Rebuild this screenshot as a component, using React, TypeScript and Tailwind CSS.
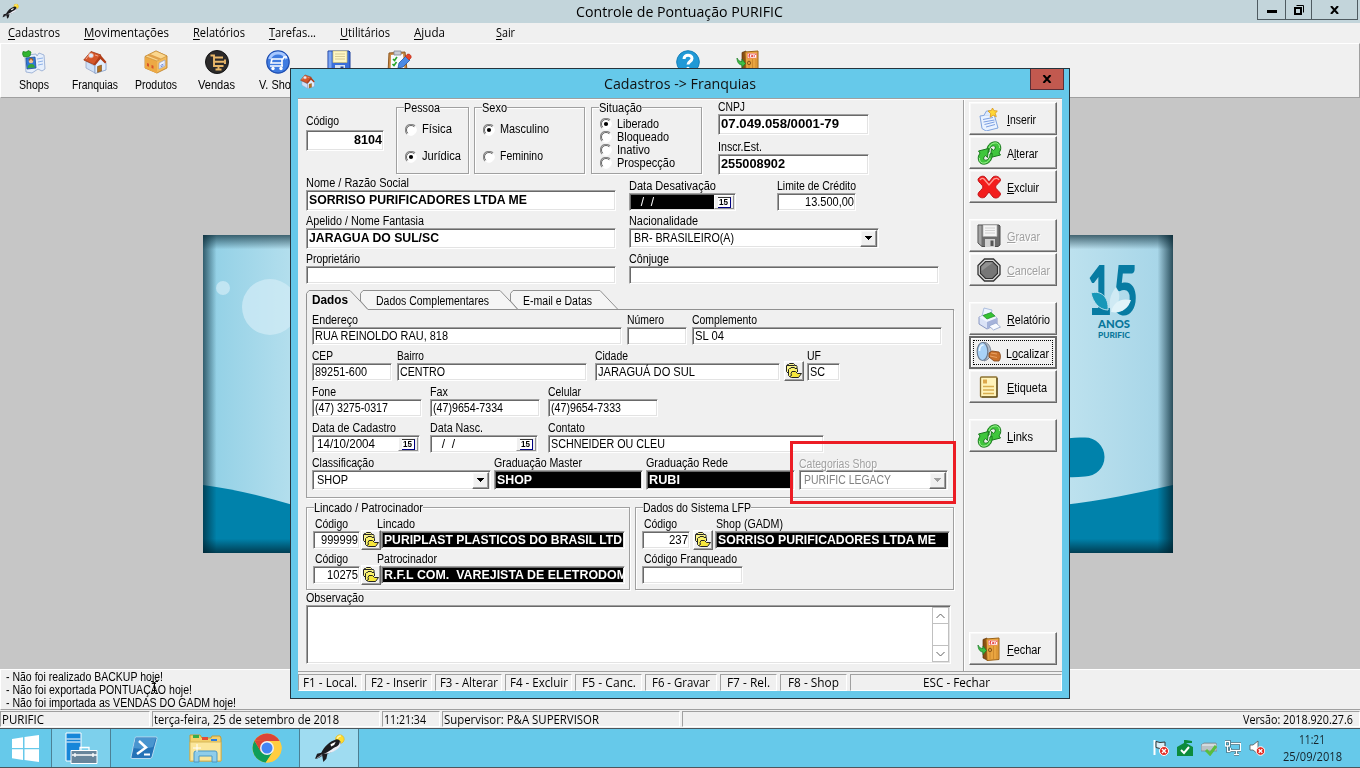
import { useLayoutEffect, useRef, type ReactNode } from 'react';
import { clsx } from 'clsx';

/* Text that is condensed or widened so that it takes a given width. */
function Fit({ w, className, children }: { w: number; className?: string; children: ReactNode }) {
  const ref = useRef<HTMLSpanElement>(null);
  useLayoutEffect(() => {
    const el = ref.current;
    if (!el) return;
    el.style.transform = 'none';
    const natural = el.getBoundingClientRect().width;
    el.style.transform = `scaleX(${w / natural})`;
  }, [w, children]);
  return (
    <span className={clsx('inline-block shrink-0 whitespace-pre', className)} style={{ width: w }}>
      <span ref={ref} className="inline-block origin-left whitespace-pre">
        {children}
      </span>
    </span>
  );
}

const sunken =
  'border border-t-[#a0a0a0] border-l-[#a0a0a0] border-b-white border-r-white shadow-[inset_1px_1px_0_#696969,inset_-1px_-1px_0_#e3e3e3]';
const raised =
  'border border-t-white border-l-white border-b-[#696969] border-r-[#696969] shadow-[inset_-1px_-1px_0_#a0a0a0,inset_1px_1px_0_#f8f8f8] bg-[#f0f0f0]';

type BoxProps = {
  w: string;
  h?: string;
  value?: string;
  vw?: number;
  bold?: boolean;
  dark?: boolean;
  right?: boolean;
  gray?: boolean;
  children?: ReactNode;
};

function Box({ w, h = 'h-[19px]', value, vw, bold, dark, right, gray, children }: BoxProps) {
  return (
    <div
      className={clsx(
        'flex shrink-0 items-center overflow-hidden',
        sunken,
        w,
        h,
        dark ? 'bg-black text-white' : 'bg-white',
        gray && 'text-[#838383]',
        right ? 'justify-end pr-[1px]' : children ? 'pl-[4px]' : 'pl-[2px]',
        bold && 'pb-[1px] font-bold',
      )}
    >
      {value && (
        <Fit w={vw ?? 40} className="leading-[14px]">
          {value}
        </Fit>
      )}
      {children}
    </div>
  );
}

function Field({
  label,
  lw,
  className,
  labelClass,
  children,
}: {
  label: string;
  lw: number;
  className?: string;
  labelClass?: string;
  children: ReactNode;
}) {
  return (
    <div className={clsx('flex flex-col', className)}>
      <div className={clsx('flex h-[13px] items-center leading-[13px]', labelClass)}>
        <Fit w={lw}>{label}</Fit>
      </div>
      {children}
    </div>
  );
}

function Arrow({ gray }: { gray?: boolean }) {
  return (
    <div className={clsx('mr-[1px] ml-auto flex h-[17px] w-[17px] items-center justify-center', raised)}>
      <svg width="7" height="4" viewBox="0 0 7 4" shapeRendering="crispEdges">
        <path d="M0 0h7v1H6v1H5v1H4v1H3V3H2V2H1V1H0z" fill={gray ? '#a0a0a0' : '#000'} />
      </svg>
    </div>
  );
}

function DateButton() {
  return (
    <div className="mr-[1px] ml-auto flex h-[14px] w-[20px] items-center justify-center border border-t-white border-l-white border-r-[#909090] border-b-[#909090] bg-[#f0f0f0]">
      <div className="flex h-[11px] w-[13px] items-center justify-center border-t border-r border-b border-t-[#333] border-r-[#000080] border-b-[#000080] bg-white text-[9px] leading-[9px] font-bold text-black">
        <Fit w={9}>15</Fit>
      </div>
    </div>
  );
}

function FolderButton({ className }: { className?: string }) {
  return (
    <div className={clsx('flex h-[20px] w-[20px] shrink-0 items-center justify-center', raised, className)}>
      <svg width="17" height="16" viewBox="0 0 17 16" className="shrink-0" strokeWidth="1">
        <path d="M2.500 10.500L.5 8.500v-6l1-1h1l1-1h4l1 1v1h2l.5 1v3" fill="#fbf58b" stroke="#222" />
        <path d="M1 2.500h7" stroke="#222" />
        <path d="M3.500 13.500l-1-1v-6l1-1h1l.5-1h3.500l.5 1h2l.5 1V9" fill="#fbf36a" stroke="#222" />
        <path d="M3.500 13.500l2 1h7l3-4h-4l-2-2h-3.500l-1 2 .5 2z" fill="#f5e63c" stroke="#222" />
      </svg>
    </div>
  );
}

function Radio({
  on,
  up,
  label,
  w,
  className,
}: {
  on?: boolean;
  up?: boolean;
  label: string;
  w: number;
  className?: string;
}) {
  return (
    <div className={clsx('flex items-center', className)}>
      <svg width="12" height="12" viewBox="0 0 12 12" className={clsx('mr-[5px] shrink-0', up && '-mt-[2px]')}>
        <circle cx="6" cy="6" r="5.300" fill="#fff" stroke="#fff" />
        <path d="M10 2A5.400 5.400 0 0 0 2 10" fill="none" stroke="#8a8a8a" strokeWidth="1.200" />
        <path d="M9.200 2.800A4.400 4.400 0 0 0 2.800 9.200" fill="none" stroke="#555" strokeWidth=".9" />
        {on && <circle cx="6" cy="6" r="2.100" fill="#000" />}
      </svg>
      <Fit w={w} className="leading-[13px]">
        {label}
      </Fit>
    </div>
  );
}

function Group({
  title,
  tw,
  className,
  children,
}: {
  title: string;
  tw: number;
  className?: string;
  children: ReactNode;
}) {
  return (
    <div
      className={clsx(
        'flex shrink-0 flex-col border border-[#a0a0a0] shadow-[1px_1px_0_#fff,inset_1px_1px_0_#fff]',
        className,
      )}
    >
      <div className="-mt-[6px] ml-[7px] flex h-[12px] shrink-0 items-center self-start bg-[#f0f0f0] leading-[12px]">
        <Fit w={tw}>{title}</Fit>
      </div>
      {children}
    </div>
  );
}

/* ---------- icons ---------- */

function HouseIcon({ size = 24 }: { size?: number }) {
  return (
    <svg width={size} height={size} viewBox="0 0 24 24">
      <path d="M3 11l9 5v7l-9-5z" fill="#cfe0f6" stroke="#8c9cc0" strokeWidth=".7" />
      <path d="M12 15l5-7 6 5v7l-11 3.500z" fill="#e3eeff" stroke="#7f9ac6" strokeWidth=".8" />
      <path d="M.8 10L8 1.500l10 3.500-7 9.500z" fill="#d4562a" stroke="#9c3312" strokeWidth=".8" />
      <path d="M17.500 5L23.500 12l-1.500 1.500-4.500-4.500-5.500 6.500-1.500-1z" fill="#b23d17" />
      <path d="M14.500 16.500l4-1.500v6l-4 1.400z" fill="#b5711d" stroke="#6b3f0c" strokeWidth=".5" />
      <circle cx="8" cy="5.500" r="2.500" fill="#dbe9fb" stroke="#e88a63" strokeWidth=".7" />
      <path d="M3 9l3-4M12 5l3 1" stroke="#f2a58a" />
    </svg>
  );
}
function ShopsIcon() {
  return (
    <svg width="24" height="24" viewBox="0 0 24 24">
      <path d="M3 7l2-2 9-1 1 2 2-3 5 2 1 14-3 2-4-2-6 4-6-1z" fill="#e6effc" stroke="#8ea6cf" strokeWidth=".8" />
      <path d="M15 9l6-1M16 12l5-1M16 15l5-1" stroke="#8fb2e8" />
      <path d="M4 8l9-1 1 11-9 1z" fill="#2f78d8" stroke="#1c4c96" strokeWidth=".8" />
      <circle cx="9" cy="11" r="2.300" fill="#f2c192" />
      <path d="M5.500 18c0-5 7-5.500 7.500-.5z" fill="#35a539" />
      <path d="M7 10.500c1-2.500 3-2.500 4 0" stroke="#a05c1b" fill="none" strokeWidth="1.400" />
      <path d="M.6 4L1 1.500l3 .6L6.500.6 9 2l-1 4-3 1-3.500-.5z" fill="#31b52f" stroke="#157a18" strokeWidth=".7" />
    </svg>
  );
}
function BoxIcon() {
  return (
    <svg width="24" height="24" viewBox="0 0 24 24">
      <path d="M1 6.500l11-5.500 11 5v12l-10 5L1 18z" fill="#f3bb5c" stroke="#b97a22" strokeWidth=".8" />
      <path d="M1 6.500L13 11v12.500L1 18z" fill="#eda944" />
      <path d="M1 6.500L12 1l11 5-10 5z" fill="#fbd78f" stroke="#c38a33" strokeWidth=".6" />
      <path d="M6 4l11 4.500-2.500 1.500L3 5.500z" fill="#e0a04a" />
      <path d="M15 13l6-3v6l-6 3z" fill="#eef3ff" stroke="#8c9ccc" strokeWidth=".6" />
      <path d="M16.500 15.500l3-1.500M16.500 17l3-1.500" stroke="#5b79cf" strokeWidth=".8" />
      <path d="M3 13l2 .8v3L3 16zM7.500 15l2 .8v3l-2-.8z" fill="#d9532b" />
    </svg>
  );
}
function VendasIcon() {
  return (
    <svg width="24" height="24" viewBox="0 0 24 24">
      <circle cx="12" cy="12" r="11.500" fill="#2c2a2a" stroke="#151515" />
      <path d="M5.500 5.500H9v10.500h9.500M9 7.500h9M9 11.700h10M20 9.500v4.500M13.500 16v4.500M10.500 19.500h6" stroke="#e9b769" strokeWidth="1.900" fill="none" />
    </svg>
  );
}
function CartIcon() {
  return (
    <svg width="24" height="24" viewBox="0 0 24 24">
      <circle cx="12" cy="12" r="11.200" fill="#3f7be0" stroke="#1e4db0" strokeWidth="1.200" />
      <path d="M3.500 9a9 9 0 0 1 17 0" stroke="#a8c8ff" fill="none" strokeWidth="3" />
      <path d="M21 7h-3l-1 2H6l-1 4h11v-4M16 13v3H4M17 16H7" stroke="#fff" strokeWidth="1.600" fill="none" />
      <circle cx="7" cy="18.500" r="1.700" fill="#fff" />
      <circle cx="15" cy="18.500" r="1.700" fill="#fff" />
    </svg>
  );
}
function DiskIcon({ gray }: { gray?: boolean }) {
  return (
    <svg width="24" height="24" viewBox="0 0 24 24">
      <path d="M1 1h21l1 1v19l-2 1.500H5L1 19z" fill={gray ? '#6d6d6d' : '#3c6fd9'} stroke={gray ? '#4c4c4c' : '#1c3f9c'} />
      <path d="M1.500 1.500h3v20l-3-2.500z" fill={gray ? '#a4a4a4' : '#7da6f2'} />
      <path d="M6 1h14v11.500H6z" fill={gray ? '#f4f4f4' : '#fdf6c4'} stroke={gray ? '#aaa' : '#cdbf74'} strokeWidth=".7" />
      <path d="M8 4h10M8 6.500h10M8 9h10" stroke={gray ? '#c6c6c6' : '#ccc08a'} strokeWidth=".8" />
      <path d="M8 15h10v8H8z" fill={gray ? '#d0d0d0' : '#d9e2f2'} />
      <path d="M13.500 16.500H16.500V22h-3z" fill={gray ? '#555' : '#24489e'} />
    </svg>
  );
}
function ClipIcon() {
  return (
    <svg width="25" height="24" viewBox="0 0 25 24">
      <path d="M2 3l16-1 2 18-19 3z" fill="#c98a45" stroke="#8e5820" />
      <path d="M4 5l12-1 1.500 15-14 2z" fill="#f7faff" />
      <path d="M7 1h7v4H7z" fill="#c8ccd4" stroke="#7e8694" strokeWidth=".8" />
      <path d="M6 9l1.500 1.500L10 7M5.500 14l1.500 1.500L9.500 12" stroke="#27a52a" strokeWidth="1.600" fill="none" />
      <path d="M11 18l1-5 7-7 4 4-7 7z" fill="#4b8be6" stroke="#2457a5" strokeWidth=".8" />
      <path d="M18.500 6.500L20 4.500c2-1.500 5 1 4 3.500l-2 2z" fill="#e5432c" stroke="#b52d18" strokeWidth=".6" />
    </svg>
  );
}
function HelpIcon() {
  return (
    <svg width="24" height="24" viewBox="0 0 24 24">
      <circle cx="12" cy="12" r="11.300" fill="#2199d6" stroke="#1680ba" />
      <path d="M8 9c0-5 8-5 8-.5 0 3-4 3-4 6" stroke="#fff" strokeWidth="3" fill="none" />
      <circle cx="12" cy="18.500" r="1.700" fill="#fff" />
    </svg>
  );
}
function DoorIcon() {
  return (
    <svg width="25" height="24" viewBox="0 0 25 24">
      <path d="M6 2.500l4-1.500v22l-4-2z" fill="#8a4f13" stroke="#5b3208" strokeWidth=".7" />
      <path d="M9 2l13-1v21.500l-12 1z" fill="#e9a540" stroke="#9a6116" />
      <path d="M13 10v12M16.500 9v13M20 9v13" stroke="#c9842a" strokeWidth=".8" />
      <rect x="11.500" y="3.500" width="9" height="4.500" fill="#fff" stroke="#e66" strokeWidth=".5" />
      <path d="M13 4.500v2.500M13 4.500h1.300M13 5.700h1M13 7h1.300M15.300 4.500l1.600 2.500M16.900 4.500L15.300 7M18.200 4.500V7M19.200 4.500h1" stroke="#d00" strokeWidth=".7" />
      <circle cx="13" cy="13" r="1.700" fill="#d9953c" stroke="#7b4a10" strokeWidth=".8" />
      <path d="M1 8c1 2.500 3 3.500 5 3.500V9l3.500 4.500L6 17.500V15c-3 0-5-3-5-7z" fill="#3dbd45" stroke="#187a23" strokeWidth=".7" />
    </svg>
  );
}
function NoteIcon() {
  return (
    <svg width="24" height="24" viewBox="0 0 24 24">
      <path d="M3 9l14-2 4 14-12 3-4-2.500z" fill="#e9f2ff" stroke="#7fa3df" />
      <path d="M6 12.500l10-2M6.500 15l11-2M7.500 17.500l10-2.500M9 20l9-2.500" stroke="#7c9fe2" />
      <path d="M6.500 9l3-5h4l3 4" fill="#dce9fc" stroke="#85a6de" />
      <path d="M15.500 1l1.500 2.700 3.300.2-2 2.500 1 3.300-3.100-1.500-3 2 .5-3.500L11 4l3.300-.5z" fill="#ffd736" stroke="#d9971b" strokeWidth=".8" />
    </svg>
  );
}
function LinkIcon() {
  return (
    <svg width="25" height="24" viewBox="0 0 25 24">
      {[0, 180].map((deg) => (
        <g key={deg} transform={`rotate(${deg} 12.500 12)`}>
          <path
            d="M10 12C9 5 13 .8 18.500.8c4 .2 6 4 5 8.200l-1.500 3 1.500 2-10 2.500 1-9 2 1.800c2-1 2.500-3.500 1-4.300-3-1-5.500 2.500-5.500 6z"
            fill="#3fc63c"
            stroke="#1b7a1e"
          />
          <path d="M12 7c1-3.500 4-5.500 7.500-5 2 .5 3.300 2.500 3 5" stroke="#a3f097" fill="none" />
        </g>
      ))}
    </svg>
  );
}
function CrossIcon() {
  return (
    <svg width="24" height="24" viewBox="0 0 24 24">
      <path d="M1 5c0-3 5-5 7-3l4 5 4-5c3-2 7 0 7.500 3 0 2-5 5-5 7s5 5 5 7c-1 4-5 5-7.500 3l-4-5-4 5c-3 2-7 0-7-3 0-2 5-5 5-7S1 7 1 5z" fill="#f31d1d" stroke="#c11318" />
      <path d="M3 5c1-2 3-2 4-1l5 6 5-6c2-1 4-1 5 1" stroke="#ff9c95" strokeWidth="1.400" fill="none" />
    </svg>
  );
}
function StopIcon() {
  return (
    <svg width="24" height="24" viewBox="0 0 24 24">
      <path d="M7.500 1h9L23 7.500v9L16.500 23h-9L1 16.500v-9z" fill="#ddd" stroke="#333" strokeWidth="1.300" />
      <path d="M8.500 3.500h7l5 5v7l-5 5h-7l-5-5v-7z" fill="#777" stroke="#333" strokeWidth="1.200" />
      <path d="M4.500 13L16 4.500H9l-4.500 4z" fill="#929292" />
    </svg>
  );
}
function PrinterIcon() {
  return (
    <svg width="24" height="24" viewBox="0 0 24 24">
      <path d="M5 9l2-8 8 2-1 5z" fill="#edf4ff" stroke="#9db2d8" strokeWidth=".8" />
      <path d="M2 10l12-4 6 5v6L10 22l-8-5z" fill="#dbe3f6" stroke="#7f8fbd" strokeWidth=".9" />
      <path d="M2 10l8 5 10-4-6-5z" fill="#f0f4fd" />
      <path d="M6 8.500l8-3 4 3.500-8 3z" fill="#35c233" stroke="#1b8d22" strokeWidth=".7" />
      <path d="M10 15v7l10-4v-7z" fill="#a5b3da" />
      <path d="M12 19l7-3 4.500 4-7 3z" fill="#f8fbff" stroke="#8fa2cc" strokeWidth=".8" />
    </svg>
  );
}
function SearchIcon() {
  return (
    <svg width="25" height="24" viewBox="0 0 25 24">
      <path d="M7 1.500c5-1 8 4.500 8 10.500 0 4-3 7-7 8z" fill="#b5bdc9" stroke="#667284" strokeWidth=".8" />
      <path d="M13 12l3-2 7 1c2 3 2 6 0 9h-5l-5-4z" fill="#c8712c" stroke="#7d3f10" strokeWidth=".8" />
      <path d="M15 12l6 1M14 15l7 1.500" stroke="#eaa365" />
      <ellipse cx="6.500" cy="10.500" rx="5.300" ry="9" fill="#a9d2f7" stroke="#6c7c92" strokeWidth="1.200" />
      <path d="M3.500 10c0-3 1-6 4-6" stroke="#eaf6ff" strokeWidth="1.600" fill="none" />
    </svg>
  );
}
function LabelIcon() {
  return (
    <svg width="24" height="24" viewBox="0 0 24 24">
      <rect x="3.500" y="2" width="16.500" height="20" rx="1" fill="#fff3ba" stroke="#8d7332" strokeWidth="1.300" />
      <rect x="6" y="4.500" width="4" height="4" fill="#dda94c" />
      <path d="M6 11.500h11M6 15h11M6 18.500h11" stroke="#d8ae50" strokeWidth="1.300" />
      <path d="M20 3v19H5" stroke="#554418" strokeWidth="1.200" fill="none" />
    </svg>
  );
}
function OrcaIcon({ size = 30 }: { size?: number }) {
  return (
    <svg width={size} height={size} viewBox="0 0 30 30">
      <circle cx="25" cy="6" r="4.200" fill="#ffdc2e" stroke="#e0b21c" strokeWidth=".6" />
      <path d="M1 25l2-5 4-1c3-6 8-11 15-13 3 0 5 3 3 6-3 4-7 6-12 8l-1 5-3 3-1-6c-2 1-4 3-7 3z" fill="#1c1c20" />
      <path d="M9 20c5-1 8-5 13-7 2-1 3-3 3-5 2 3 0 6-3 8-4 3-8 4-13 4z" fill="#eceef6" />
      <path d="M16 11l5-2.500-1.500 3-3 1.500z" fill="#fff" />
      <path d="M3 24c2 0 3-2 5-3" stroke="#8f95a2" fill="none" />
      <path d="M22.500 5.500A3.500 3.500 0 0 1 26 3" stroke="#fff3a6" strokeWidth="1.400" fill="none" />
    </svg>
  );
}

/* ---------- page parts ---------- */

function ToolItem({ icon, label, w }: { icon: ReactNode; label?: string; w?: number }) {
  return (
    <div className="flex w-[61px] shrink-0 flex-col items-center">
      <div className="flex h-[24px] items-center">{icon}</div>
      {label && (
        <div className="mt-[4px] h-[14px] text-[12px] leading-[14px]">
          <Fit w={w ?? 40}>{label}</Fit>
        </div>
      )}
    </div>
  );
}

function SideButton({
  icon,
  w,
  disabled,
  focus,
  className,
  children,
}: {
  icon: ReactNode;
  w: number;
  disabled?: boolean;
  focus?: boolean;
  className?: string;
  children: ReactNode;
}) {
  return (
    <div
      className={clsx(
        'flex h-[33px] w-[88px] shrink-0 items-center',
        focus ? 'border-2 border-[#696969] bg-[#f0f0f0] shadow-[inset_1px_1px_0_#fff]' : raised,
        className,
      )}
    >
      <div
        className={clsx(
          'flex items-center',
          focus ? 'ml-[2px] h-[25px] w-[80px] border border-dotted border-black pl-[2px]' : 'pl-[7px]',
        )}
      >
        <div className="w-[25px] shrink-0">{icon}</div>
        <Fit
          w={w}
          className={clsx('mt-[2px] ml-[5px] leading-[14px]', disabled && 'text-[#a0a0a0] [text-shadow:1px_1px_0_#fff]')}
        >
          {children}
        </Fit>
      </div>
    </div>
  );
}

function MenuItem({ first, rest, w, className }: { first: string; rest: string; w: number; className: string }) {
  return (
    <div className={className}>
      <Fit w={w}>
        <u className="underline-offset-2">{first}</u>
        {rest}
      </Fit>
    </div>
  );
}

function KeyCell({ w, tw, children }: { w: string; tw: number; children: string }) {
  return (
    <div
      className={clsx(
        'mr-[3px] flex h-[17px] shrink-0 items-center justify-center border border-t-[#a0a0a0] border-l-[#a0a0a0] border-r-white border-b-white',
        w,
      )}
    >
      <Fit w={tw} className="leading-[15px]">
        {children}
      </Fit>
    </div>
  );
}

function StatusCell({ w, tw, right, children }: { w: string; tw: number; right?: boolean; children?: string }) {
  return (
    <div
      className={clsx(
        'mr-[2px] flex h-[16px] shrink-0 items-center border border-t-[#a0a0a0] border-l-[#a0a0a0] border-r-white border-b-white pl-[1px]',
        right && 'justify-end pr-[6px]',
        w,
      )}
    >
      {children && (
        <Fit w={tw} className="leading-[15px]">
          {children}
        </Fit>
      )}
    </div>
  );
}

function Wallpaper() {
  return (
    <svg width="970" height="318" viewBox="0 0 970 318">
      <defs>
        <linearGradient id="sky" x1="0" x2="1">
          <stop offset="0" stopColor="#8fcfe5" />
          <stop offset=".1" stopColor="#b7e0ee" />
          <stop offset=".88" stopColor="#c0e3ef" />
          <stop offset="1" stopColor="#a4d4e7" />
        </linearGradient>
        <linearGradient id="edgeX" x1="0" x2="1">
          <stop offset="0" stopColor="#00202c" stopOpacity=".65" />
          <stop offset=".014" stopColor="#00202c" stopOpacity="0" />
          <stop offset=".984" stopColor="#00202c" stopOpacity="0" />
          <stop offset="1" stopColor="#00202c" stopOpacity=".75" />
        </linearGradient>
        <linearGradient id="edgeY" x1="0" x2="0" y2="1">
          <stop offset="0" stopColor="#00202c" stopOpacity=".65" />
          <stop offset=".045" stopColor="#00202c" stopOpacity="0" />
          <stop offset=".955" stopColor="#00202c" stopOpacity="0" />
          <stop offset="1" stopColor="#00202c" stopOpacity=".7" />
        </linearGradient>
      </defs>
      <rect width="970" height="318" fill="url(#sky)" />
      <circle cx="67" cy="72" r="28" fill="#d3edf6" opacity=".7" />
      <circle cx="20" cy="53" r="7" fill="#d3edf6" opacity=".7" />
      <path d="M0 250c30 4 60 11 90 20v48H0z" fill="#0082ab" />
      <path d="M860 204c8-1.500 15-1.500 22-1.500a19.500 19.500 0 0 1 0 39c-8 1-15 .8-22 .5z" fill="#0082ab" />
      <path d="M860 270c38-4 74-12 110-20v68H860z" fill="#0082ab" />
      <text x="884" y="80" fontSize="68" fontWeight="900" textLength="51" lengthAdjust="spacingAndGlyphs" fontFamily="Lato, sans-serif" fill="#077ba2">
        15
      </text>
      <path d="M888 58c10-3 18 4 17 17-9 0-15-8-17-17z" fill="#1797b8" stroke="#b8dfed" />
      <path d="M908 76c-4-12 2-20 5-24 5 7 5 16-5 24z" fill="#cfeaf4" />
      <path d="M908 77c3-11 10-14 20-12-3 9-10 14-20 12z" fill="#e0f3f9" />
      <text x="895" y="93" fontSize="10.500" fontWeight="900" textLength="32" lengthAdjust="spacingAndGlyphs" fontFamily="Lato, sans-serif" fill="#08769a">
        ANOS
      </text>
      <text x="895" y="103" fontSize="7.500" fontWeight="900" textLength="32" lengthAdjust="spacingAndGlyphs" fontFamily="Lato, sans-serif" fill="#08769a">
        PURIFIC
      </text>
      <rect width="970" height="318" fill="url(#edgeX)" />
      <rect width="970" height="318" fill="url(#edgeY)" />
    </svg>
  );
}

function Tabs() {
  return (
    <div className="relative h-[20px] w-[648px]">
      <svg width="648" height="20" className="absolute inset-0" fill="none" stroke="#909090">
        <path d="M.5 20V3.500L3 .5H44L62 19.500H648" />
        <path d="M54.500 11V3.500L57 .5H194L212 19.500H62z" fill="#f5f5f5" />
        <path d="M204.500 11V3.500L207 .5H294L312 19.500H212z" fill="#f5f5f5" />
      </svg>
      <div className="relative flex h-[20px] items-center pl-[6px] leading-[14px]">
        <Fit w={36} className="font-bold">
          Dados
        </Fit>
        <Fit w={113} className="mt-[2px] ml-[28px]">
          Dados Complementares
        </Fit>
        <Fit w={69} className="mt-[2px] ml-[34px]">
          E-mail e Datas
        </Fit>
      </div>
    </div>
  );
}

function Form() {
  return (
    <div className="flex h-[571px] w-[665px] shrink-0 flex-col pl-[8px]">
      <div className="flex h-[77px] shrink-0 items-start">
        <div className="mt-[15px] flex w-[78px] flex-col items-start gap-[2px]">
          <Fit w={33} className="h-[13px] leading-[13px]">
            Código
          </Fit>
          <Box w="w-[78px]" h="h-[21px]" value="8104" vw={28} bold right />
        </div>
        <Group title="Pessoa" tw={36} className="mt-[7px] ml-[12px] h-[67px] w-[73px]">
          <Radio label="Física" w={30} className="mt-[9px] ml-[8px]" />
          <Radio on label="Jurídica" w={39} className="mt-[14px] ml-[8px]" />
        </Group>
        <Group title="Sexo" tw={25} className="mt-[7px] ml-[5px] h-[67px] w-[111px]">
          <Radio on label="Masculino" w={49} className="mt-[9px] ml-[8px]" />
          <Radio label="Feminino" w={43} className="mt-[14px] ml-[8px]" />
        </Group>
        <Group title="Situação" tw={43} className="mt-[7px] ml-[6px] h-[67px] w-[111px]">
          <Radio on up label="Liberado" w={42} className="mt-[4px] ml-[8px] h-[13px]" />
          <Radio up label="Bloqueado" w={52} className="ml-[8px] h-[13px]" />
          <Radio up label="Inativo" w={33} className="ml-[8px] h-[13px]" />
          <Radio up label="Prospecção" w={58} className="ml-[8px] h-[13px]" />
        </Group>
        <div className="mt-[1px] ml-[16px] flex flex-col gap-[6px]">
          <Field label="CNPJ" lw={27}>
            <Box w="w-[151px]" h="h-[21px]" value="07.049.058/0001-79" vw={118} bold />
          </Field>
          <Field label="Inscr.Est." lw={44}>
            <Box w="w-[151px]" h="h-[21px]" value="255008902" vw={64} bold />
          </Field>
        </div>
      </div>

      <div className="flex h-[38px] shrink-0 items-start">
        <Field label="Nome / Razão Social" lw={103}>
          <Box w="w-[310px]" h="h-[21px]" value="SORRISO PURIFICADORES LTDA ME" vw={218} bold />
        </Field>
        <Field label="Data Desativação" lw={87} className="mt-[3px] ml-[13px]">
          <Box w="w-[107px]" h="h-[18px]" value="  /  /" vw={20} dark>
            <DateButton />
          </Box>
        </Field>
        <Field label="Limite de Crédito" lw={79} className="mt-[3px] ml-[41px]">
          <Box w="w-[79px]" h="h-[18px]" value="13.500,00" vw={49} right />
        </Field>
      </div>

      <div className="flex h-[38px] shrink-0 items-start">
        <Field label="Apelido / Nome Fantasia" lw={118}>
          <Box w="w-[310px]" h="h-[21px]" value="JARAGUA DO SUL/SC" vw={130} bold />
        </Field>
        <Field label="Nacionalidade" lw={69} className="ml-[13px]">
          <Box w="w-[250px]" h="h-[20px]" value="BR- BRASILEIRO(A)" vw={100}>
            <Arrow />
          </Box>
        </Field>
      </div>

      <div className="flex h-[37px] shrink-0 items-start">
        <Field label="Proprietário" lw={54}>
          <Box w="w-[310px]" h="h-[18px]" />
        </Field>
        <Field label="Cônjuge" lw={40} className="ml-[13px]">
          <Box w="w-[310px]" h="h-[18px]" />
        </Field>
      </div>

      <Tabs />
      <div className="flex h-[188px] w-[648px] shrink-0 flex-col border-x border-b border-[#a0a0a0] pt-[4px] pl-[5px] shadow-[1px_1px_0_#fff]">
        <div className="flex h-[36px] shrink-0">
          <Field label="Endereço" lw={46}>
            <Box w="w-[310px]" h="h-[18px]" value="RUA REINOLDO RAU, 818" vw={133} />
          </Field>
          <Field label="Número" lw={37} className="ml-[5px]">
            <Box w="w-[60px]" h="h-[18px]" />
          </Field>
          <Field label="Complemento" lw={65} className="ml-[5px]">
            <Box w="w-[250px]" h="h-[18px]" value="SL 04" vw={29} />
          </Field>
        </div>
        <div className="flex h-[36px] shrink-0">
          <Field label="CEP" lw={21}>
            <Box w="w-[80px]" h="h-[18px]" value="89251-600" vw={52} />
          </Field>
          <Field label="Bairro" lw={27} className="ml-[5px]">
            <Box w="w-[190px]" h="h-[18px]" value="CENTRO" vw={45} />
          </Field>
          <Field label="Cidade" lw={33} className="ml-[8px]">
            <Box w="w-[185px]" h="h-[18px]" value="JARAGUÁ DO SUL" vw={97} />
          </Field>
          <FolderButton className="mt-[11px] ml-[4px]" />
          <Field label="UF" lw={14} className="ml-[3px]">
            <Box w="w-[33px]" h="h-[18px]" value="SC" vw={15} />
          </Field>
        </div>
        <div className="flex h-[36px] shrink-0">
          <Field label="Fone" lw={24}>
            <Box w="w-[110px]" h="h-[18px]" value="(47) 3275-0317" vw={73} />
          </Field>
          <Field label="Fax" lw={18} className="ml-[8px]">
            <Box w="w-[110px]" h="h-[18px]" value="(47)9654-7334" vw={70} />
          </Field>
          <Field label="Celular" lw={33} className="ml-[8px]">
            <Box w="w-[110px]" h="h-[18px]" value="(47)9654-7333" vw={70} />
          </Field>
        </div>
        <div className="flex h-[36px] shrink-0">
          <Field label="Data de Cadastro" lw={84}>
            <Box w="w-[108px]" h="h-[18px]" value="14/10/2004" vw={58}>
              <DateButton />
            </Box>
          </Field>
          <Field label="Data Nasc." lw={53} className="ml-[10px]">
            <Box w="w-[108px]" h="h-[18px]" value="  /  /" vw={20}>
              <DateButton />
            </Box>
          </Field>
          <Field label="Contato" lw={37} className="ml-[10px]">
            <Box w="w-[276px]" h="h-[18px]" value="SCHNEIDER OU CLEU" vw={114} />
          </Field>
        </div>
        <div className="-mt-px flex h-[36px] shrink-0">
          <Field label="Classificação" lw={62}>
            <Box w="w-[179px]" h="h-[20px]" value="SHOP" vw={31}>
              <Arrow />
            </Box>
          </Field>
          <Field label="Graduação Master" lw={88} className="ml-[3px]">
            <Box w="w-[149px]" h="h-[20px]" value="SHOP" vw={35} bold dark />
          </Field>
          <Field label="Graduação Rede" lw={82} className="ml-[3px]">
            <Box w="w-[149px]" h="h-[20px]" value="RUBI" vw={31} bold dark />
          </Field>
          <Field
            label="Categorias Shop"
            lw={78}
            className="ml-[4px]"
            labelClass="text-[#a0a0a0] [text-shadow:1px_1px_0_#fff] pt-[2px]"
          >
            <Box w="w-[149px]" h="h-[20px]" value="PURIFIC LEGACY" vw={87} gray>
              <Arrow gray />
            </Box>
          </Field>
        </div>
      </div>

      <div className="mt-[9px] flex h-[83px] shrink-0 gap-[5px]">
        <Group title="Lincado / Patrocinador" tw={109} className="h-[83px] w-[324px]">
          <div className="mt-[4px] flex h-[35px] pl-[6px]">
            <Field label="Código" lw={33} className="w-[47px]" labelClass="pl-[2px]">
              <Box w="w-[47px]" h="h-[18px]" value="999999" vw={37} right />
            </Field>
            <FolderButton className="mt-[12px] ml-px" />
            <Field label="Lincado" lw={38} labelClass="-ml-[4px]">
              <Box w="w-[244px]" h="h-[18px]" value="PURIPLAST PLASTICOS DO BRASIL LTD" vw={238} bold dark />
            </Field>
          </div>
          <div className="flex h-[35px] pl-[6px]">
            <Field label="Código" lw={33} className="w-[47px]" labelClass="pl-[2px]">
              <Box w="w-[47px]" h="h-[18px]" value="10275" vw={31} right />
            </Field>
            <FolderButton className="mt-[12px] ml-px" />
            <Field label="Patrocinador" lw={60} labelClass="-ml-[4px]">
              <Box w="w-[244px]" h="h-[18px]" value="R.F.L COM.  VAREJISTA DE ELETRODOM" vw={243} bold dark />
            </Field>
          </div>
        </Group>
        <Group title="Dados do Sistema LFP" tw={108} className="h-[83px] w-[319px]">
          <div className="mt-[4px] flex h-[35px] pl-[6px]">
            <Field label="Código" lw={33} className="w-[48px]" labelClass="pl-[2px]">
              <Box w="w-[48px]" h="h-[18px]" value="237" vw={19} right />
            </Field>
            <FolderButton className="mt-[12px] ml-[3px]" />
            <Field label="Shop (GADM)" lw={67} className="ml-[2px]" labelClass="pl-[1px]">
              <Box w="w-[235px]" h="h-[18px]" value="SORRISO PURIFICADORES LTDA ME" vw={218} bold dark />
            </Field>
          </div>
          <div className="flex h-[35px] pl-[6px]">
            <Field label="Código Franqueado" lw={93} labelClass="pl-[2px]">
              <Box w="w-[101px]" h="h-[18px]" />
            </Field>
          </div>
        </Group>
      </div>

      <Field label="Observação" lw={58} className="mt-[2px]">
        <div className={clsx('flex h-[59px] w-[645px] justify-end bg-white', sunken)}>
          <div className="mt-px mr-px mb-px flex w-[17px] flex-col border border-[#c0c0c0] bg-white">
            <div className="flex h-[16px] items-center justify-center border-b border-[#c0c0c0]">
              <svg width="9" height="6" fill="none" stroke="#606060">
                <path d="M.5 5L4.500 1l4 4" />
              </svg>
            </div>
            <div className="flex-1" />
            <div className="flex h-[16px] items-center justify-center border-t border-[#c0c0c0]">
              <svg width="9" height="6" fill="none" stroke="#606060">
                <path d="M.5 1l4 4 4-4" />
              </svg>
            </div>
          </div>
        </div>
      </Field>
    </div>
  );
}

function FranchiseDialog() {
  return (
    <div className="absolute top-[68px] left-[290px] flex h-[631px] w-[780px] flex-col border border-[#26343c] bg-[#66c9ea] px-[7px] font-['Liberation_Sans',sans-serif] text-[12px] text-black">
      <div className="flex h-[29px] shrink-0 items-start">
        <div className="mt-[5px] ml-[2px] w-[16px]">
          <HouseIcon size={15} />
        </div>
        <div className="ml-[288px] h-[29px] font-['Open_Sans','Noto_Sans',sans-serif] text-[14px] leading-[29px] text-[#111]">
          <Fit w={152}>{'Cadastros -> Franquias'}</Fit>
        </div>
        <div className="-mr-[2px] ml-auto flex h-[21px] w-[34px] items-center justify-center border border-t-0 border-[#5b3038] bg-[#c2594f]">
          <svg width="10" height="8" viewBox="0 0 10 8" stroke="#000" strokeWidth="2">
            <path d="M1.500 0l7 8M8.500 0l-7 8" />
          </svg>
        </div>
      </div>
      <div className="flex h-[593px] w-[764px] shrink-0 flex-col border-t border-[#a0a0a0] bg-[#f0f0f0]">
        <div className="flex h-[573px] shrink-0 border-t border-b border-t-white border-b-[#a0a0a0]">
          <Form />
          <div className="flex w-[99px] flex-col border-l border-[#a0a0a0] pt-[2px] pl-[5px] shadow-[inset_1px_0_0_#fff]">
            <SideButton icon={<NoteIcon />} w={29}><u>I</u>nserir</SideButton>
            <SideButton className="mt-px" icon={<LinkIcon />} w={31}>A<u>l</u>terar</SideButton>
            <SideButton className="mt-px" icon={<CrossIcon />} w={32}><u>E</u>xcluir</SideButton>
            <SideButton className="mt-[16px]" icon={<DiskIcon gray />} w={33} disabled><u>G</u>ravar</SideButton>
            <SideButton className="mt-px" icon={<StopIcon />} w={43} disabled><u>C</u>ancelar</SideButton>
            <SideButton className="mt-[16px]" icon={<PrinterIcon />} w={43}><u>R</u>elatório</SideButton>
            <SideButton className="mt-px" icon={<SearchIcon />} w={43} focus>L<u>o</u>calizar</SideButton>
            <SideButton className="mt-px" icon={<LabelIcon />} w={40}><u>E</u>tiqueta</SideButton>
            <SideButton className="mt-[16px]" icon={<LinkIcon />} w={26}><u>L</u>inks</SideButton>
            <SideButton className="mt-[180px]" icon={<DoorIcon />} w={34}><u>F</u>echar</SideButton>
          </div>
        </div>
        <div className="flex pt-[2px] font-['Open_Sans','Noto_Sans',sans-serif] text-[12px]">
          <KeyCell w="w-[64px]" tw={54}>F1 - Local.</KeyCell>
          <KeyCell w="w-[67px]" tw={56}>F2 - Inserir</KeyCell>
          <KeyCell w="w-[67px]" tw={58}>F3 - Alterar</KeyCell>
          <KeyCell w="w-[67px]" tw={58}>F4 - Excluir</KeyCell>
          <KeyCell w="w-[67px]" tw={54}>F5 - Canc.</KeyCell>
          <KeyCell w="w-[72px]" tw={58}>F6 - Gravar</KeyCell>
          <KeyCell w="w-[57px]" tw={43}>F7 - Rel.</KeyCell>
          <KeyCell w="w-[67px]" tw={51}>F8 - Shop</KeyCell>
          <KeyCell w="w-[212px]" tw={67}>ESC - Fechar</KeyCell>
        </div>
      </div>
      <div className="absolute top-[372px] left-[499px] h-[63px] w-[166px] border-3 border-[#ec1c24]" />
    </div>
  );
}

function Taskbar() {
  return (
    <div className="flex h-[40px] w-full shrink-0 border-t border-b border-[#4c565c] bg-[#66c9ea]">
      <div className="flex w-[51px] items-center justify-center">
        <svg width="27" height="27" viewBox="0 0 27 27" fill="#fff">
          <path d="M0 4l11-1.700V13H0zM12.500 2L27 0v13H12.500zM0 14.300h11V25L0 23.300zM12.500 14.300H27V27l-14.500-2z" />
        </svg>
      </div>
      <div className="flex w-[60px] items-center justify-center border-x border-[#4c8196] bg-[#7dd0ec]">
        <svg width="33" height="34" viewBox="0 0 33 34">
          <path d="M1 2h15v28H1z" fill="#1686d9" stroke="#fff" />
          <path d="M1.500 8h14M1.500 11h14" stroke="#fff" />
          <path d="M6 19.500h26v13H6z" fill="#68859b" stroke="#fff" />
          <path d="M15 19v-2.500h9V19M7 24h25M10 22v4M28 22v4" stroke="#fff" fill="none" strokeWidth="1.300" />
        </svg>
      </div>
      <div className="flex w-[65px] items-center justify-center">
        <svg width="28" height="24" viewBox="0 0 28 24">
          <path d="M6 1h20q1.500 0 1 1.500L22 21q-.5 1.500-2 1.500H2q-1.500 0-1-1.500L5 2.500Q5 1 6 1z" fill="#2473b8" stroke="#b7d9ef" />
          <path d="M6 2h20l-3 9q-9 3-20 1z" fill="#5aa4d9" opacity=".7" />
          <path d="M9 5l7 6.500L7 18" stroke="#fff" strokeWidth="2.500" fill="none" />
          <path d="M14 18.500h6" stroke="#fff" strokeWidth="2" />
        </svg>
      </div>
      <div className="flex w-[58px] items-center justify-center">
        <svg width="33" height="30" viewBox="0 0 33 30">
          <path d="M1 2h10l2 3h9l1-2h8l1 2v23H1z" fill="#f2d06b" stroke="#c39a35" />
          <path d="M4 2h6v3H4z" fill="#35ad48" />
          <path d="M13 4h6v3h-6z" fill="#e44b35" />
          <path d="M22 6h6v2h-6z" fill="#2b7ce0" />
          <path d="M1 9h31v19H1z" fill="#fbe69a" stroke="#d7b759" />
          <path d="M5 29V20q0-2 2-2h19q2 0 2 2v9h-5v-6H10v6z" fill="#8fcdea" stroke="#4b98c4" />
          <path d="M8 11v8M4 15h8" stroke="#fff" />
        </svg>
      </div>
      <div className="flex w-[65px] items-center justify-center">
        <svg width="30" height="30" viewBox="0 0 30 30">
          <circle cx="15" cy="15" r="14.500" fill="#fdd033" />
          <path d="M2.500 7.700A14.500 14.500 0 0 1 27.600 7.900H15z" fill="#db4437" />
          <path d="M2.500 7.700A14.500 14.500 0 0 0 13.800 29.400L21 18.500 8.700 18z" fill="#0f9d58" />
          <path d="M2.500 7.700L8.700 18.500 15 8z" fill="#db4437" />
          <path d="M27.600 7.900H15l6.200 10.600-7.400 11A14.500 14.500 0 0 0 27.600 7.900z" fill="#ffcd40" />
          <circle cx="15" cy="15" r="7" fill="#f1f1f1" />
          <circle cx="15" cy="15" r="5.500" fill="#4285f4" />
        </svg>
      </div>
      <div className="flex w-[60px] items-center justify-center border-x border-[#4c7f93] bg-[#9fdcf1]">
        <OrcaIcon size={31} />
      </div>
      <div className="ml-auto flex items-center gap-[8px]">
        <svg width="16" height="16" viewBox="0 0 16 16">
          <path d="M1.500 0v15" stroke="#fff" strokeWidth="2" />
          <path d="M3 1.500l4 1 5-.5v6l-5 .5-4-1z" fill="#d6eef7" stroke="#333" />
          <circle cx="11" cy="11" r="4.500" fill="#e32b23" stroke="#fff" />
          <path d="M9 9l4 4M13 9l-4 4" stroke="#fff" strokeWidth="1.400" />
        </svg>
        <svg width="16" height="16" viewBox="0 0 16 16">
          <path d="M0 7l7-4V0h2l6 1v2H9l7 4v9H0z" fill="#0c8b3c" />
          <path d="M4 10l3 3 5-6" stroke="#fff" strokeWidth="2" fill="none" />
        </svg>
        <svg width="16" height="16" viewBox="0 0 16 16">
          <path d="M0 5l3-2h12l1 2v6H0z" fill="#b9c2c6" stroke="#74838b" strokeWidth=".7" />
          <path d="M1 5h14" stroke="#eef3f5" />
          <path d="M5 10l4 4 6-8" stroke="#59bd3e" strokeWidth="3" fill="none" />
        </svg>
        <svg width="16" height="16" viewBox="0 0 16 16" fill="none">
          <path d="M6 3.500h9.500v7H5.500V8M9 14.500h5M11.500 11v3M.5 1.500h4V6h-4zM2.500 6v5.500h3" stroke="#274b5a" strokeWidth="2.400" />
          <path d="M6 3.500h9.500v7H5.500V8M9 14.500h5M11.500 11v3M.5 1.500h4V6h-4zM2.500 6v5.500h3" stroke="#fff" strokeWidth="1.300" />
        </svg>
        <svg width="16" height="16" viewBox="0 0 16 16">
          <path d="M1 5h3l5-4v13L4 10H1z" fill="#fff" stroke="#555" strokeWidth=".8" />
          <circle cx="11.500" cy="11" r="4.300" fill="#e32b23" stroke="#fff" />
          <path d="M9.700 9.200l3.600 3.600M13.300 9.200l-3.600 3.600" stroke="#fff" strokeWidth="1.300" />
        </svg>
      </div>
      <div className="mr-[18px] ml-[17px] flex w-[60px] flex-col items-center pt-[2px] text-[12px] leading-[17px] text-[#15232a]">
        <Fit w={26}>11:21</Fit>
        <Fit w={59}>25/09/2018</Fit>
      </div>
    </div>
  );
}

export default function App() {
  return (
    <div className="relative flex h-[768px] w-[1360px] flex-col overflow-hidden bg-[#f0f0f0] font-['Open_Sans','Noto_Sans',sans-serif] text-[12px] text-black">
      <div className="flex h-[23px] shrink-0 items-start bg-[#c3d5db]">
        <div className="mt-[3px] ml-[2px] w-[17px]">
          <OrcaIcon size={17} />
        </div>
        <div className="ml-[557px] text-[14px] leading-[23px]">
          <Fit w={207}>Controle de Pontuação PURIFIC</Fit>
        </div>
        <div className="mr-[2px] ml-auto flex h-[20px] w-[101px] border border-t-0 border-[#4f5b61]">
          <div className="flex w-[28px] items-end justify-center border-r border-[#4f5b61] pb-[6px]">
            <div className="h-[3px] w-[10px] bg-black" />
          </div>
          <div className="flex w-[26px] items-center justify-center border-r border-[#4f5b61]">
            <svg width="10" height="10" fill="none" stroke="#000">
              <path d="M2.500 .5h7v7" />
              <path d="M1 3h6v6H1z" strokeWidth="2" />
            </svg>
          </div>
          <div className="flex flex-1 items-center justify-center">
            <svg width="9" height="8" viewBox="0 0 9 8" stroke="#000" strokeWidth="2">
              <path d="M1 0l7 8M8 0L1 8" />
            </svg>
          </div>
        </div>
      </div>

      <div className="flex h-[20px] shrink-0 items-center leading-[18px]">
        <MenuItem className="ml-[8px] w-[76px]" first="C" rest="adastros" w={52} />
        <MenuItem className="w-[109px]" first="M" rest="ovimentações" w={85} />
        <MenuItem className="w-[76px]" first="R" rest="elatórios" w={52} />
        <MenuItem className="w-[71px]" first="T" rest="arefas..." w={47} />
        <MenuItem className="w-[74px]" first="U" rest="tilitários" w={50} />
        <MenuItem className="w-[82px]" first="A" rest="juda" w={31} />
        <MenuItem className="w-[60px]" first="S" rest="air" w={19} />
      </div>

      <div className="flex h-[55px] shrink-0 border-t border-r border-b border-l border-t-white border-r-[#a0a0a0] border-b-[#a0a0a0] border-l-white pt-[6px] pl-[2px] font-['Liberation_Sans',sans-serif]">
        <ToolItem icon={<ShopsIcon />} label="Shops" w={30} />
        <ToolItem icon={<HouseIcon />} label="Franquias" w={46} />
        <ToolItem icon={<BoxIcon />} label="Produtos" w={42} />
        <ToolItem icon={<VendasIcon />} label="Vendas" w={37} />
        <ToolItem icon={<CartIcon />} label="V. Shop" w={38} />
        <ToolItem icon={<DiskIcon />} />
        <ToolItem icon={<ClipIcon />} />
        <div className="w-[227px]" />
        <ToolItem icon={<HelpIcon />} />
        <ToolItem icon={<DoorIcon />} />
      </div>

      <div className="h-[571px] shrink-0 bg-[#c6c6c6] pt-[137px] pl-[203px]">
        <Wallpaper />
      </div>

      <div className="flex h-[41px] shrink-0 flex-col border-t border-b border-l border-t-white border-b-[#a0a0a0] border-l-white pt-[1px] pl-[5px] font-['Liberation_Sans',sans-serif] leading-[13px]">
        <Fit w={157} className="h-[13px] self-start">- Não foi realizado BACKUP hoje!</Fit>
        <Fit w={186} className="h-[13px] self-start">- Não foi exportada PONTUAÇÃO hoje!</Fit>
        <Fit w={230} className="h-[13px] self-start">- Não foi importada as VENDAS DO GADM hoje!</Fit>
      </div>

      <div className="flex h-[18px] shrink-0 pt-[1px]">
        <StatusCell w="w-[150px]" tw={42}>PURIFIC</StatusCell>
        <StatusCell w="w-[228px]" tw={185}>terça-feira, 25 de setembro de 2018</StatusCell>
        <StatusCell w="w-[58px]" tw={42}>11:21:34</StatusCell>
        <StatusCell w="w-[238px]" tw={155}>Supervisor: P&amp;A SUPERVISOR</StatusCell>
        <StatusCell w="w-[678px]" tw={110} right>Versão: 2018.920.27.6</StatusCell>
      </div>

      <Taskbar />
      <svg width="7" height="13" viewBox="0 0 7 13" fill="none" stroke="#000" className="absolute top-[681px] left-[151px]">
        <path d="M0 .5h2.500L3.500 2l1-1.500H7M3.500 2v9M0 12.500h2.500l1-1.500 1 1.500H7" />
      </svg>
      <FranchiseDialog />
    </div>
  );
}
